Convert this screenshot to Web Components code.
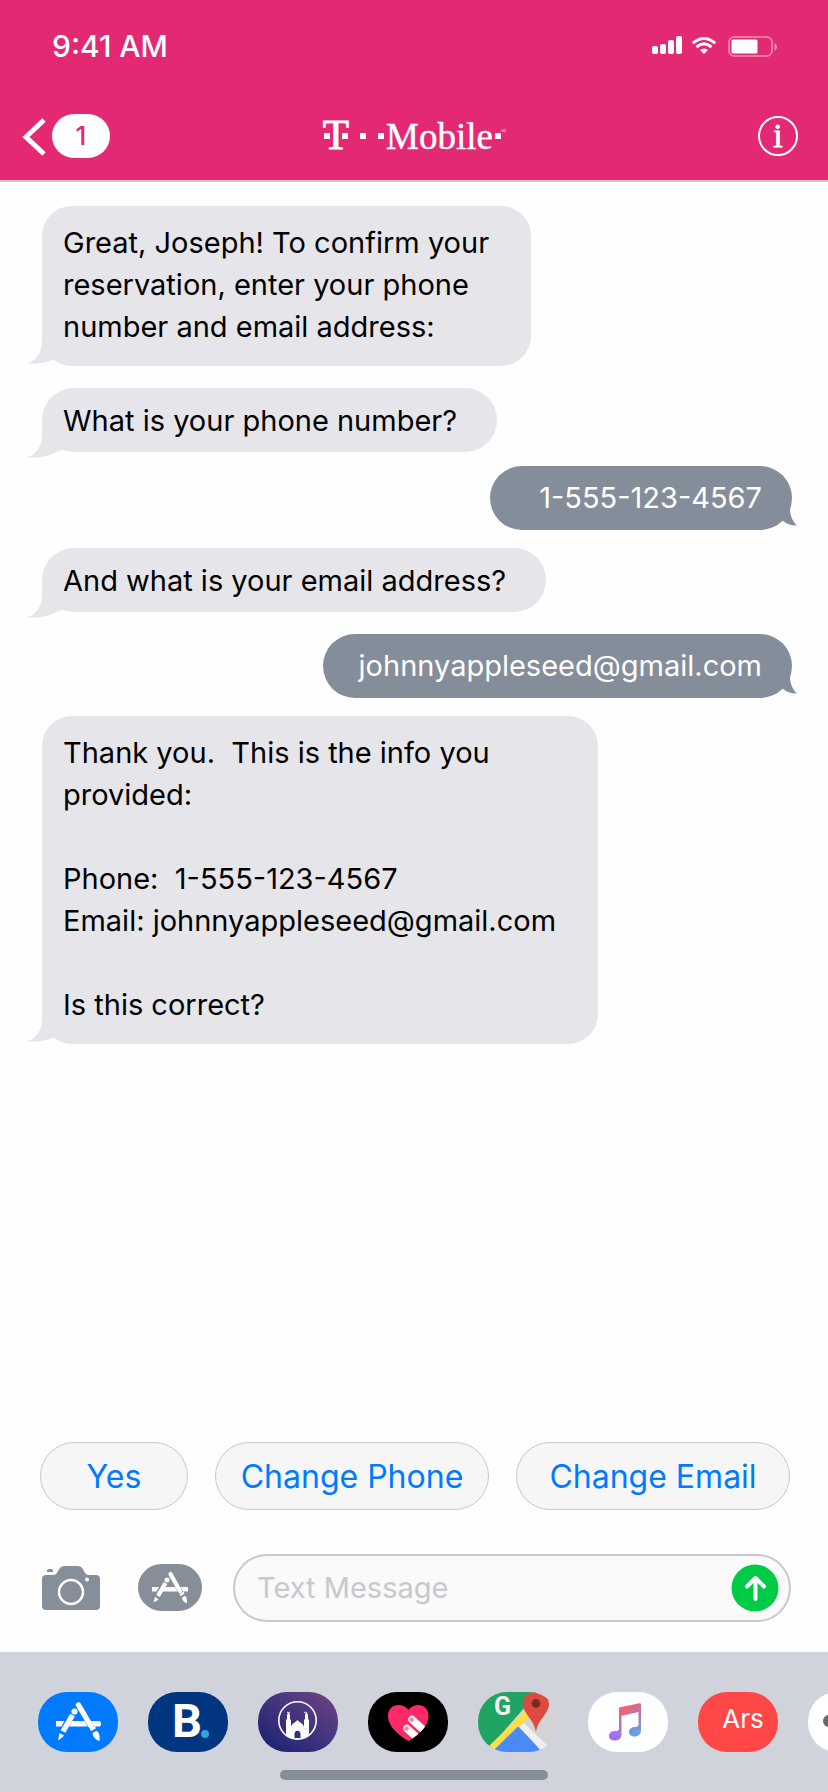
<!DOCTYPE html>
<html lang="en">
<head>
<meta charset="utf-8">
<meta name="viewport" content="width=device-width, initial-scale=1">
<title>Messages</title>
<style>
  body {
    margin: 0;
    min-height: 100vh;
    display: flex;
    flex-direction: column;
    background: #fefefe;
    font-family: Inter, "Liberation Sans", sans-serif;
    --brand: #e32874;
    --received: #e5e5ea;
    --sent: #848e9a;
    --slate: #868e99;
    --blue: #007aff;
  }
  main {
    flex: 1;
    display: flex;
    flex-direction: column;
    padding: 24px 36px 24px 42px;
  }
  .gap-s { margin-top: 14px; }
  .gap-m { margin-top: 18px; }
  .gap-l { margin-top: 22px; }
  .replies {
    display: grid;
    grid-template-columns: 148fr 274fr 274fr;
    gap: 27px;
    padding: 0 38px 0 40px;
  }
</style>
</head>
<body>
<status-bar>9:41 AM</status-bar>
<chat-header count="1"></chat-header>

<main>
  <chat-bubble>Great, Joseph! To confirm your
reservation, enter your phone
number and email address:</chat-bubble>
  <chat-bubble class="gap-l" short>What is your phone number?</chat-bubble>
  <chat-bubble class="gap-s" sent>1-555-123-4567</chat-bubble>
  <chat-bubble class="gap-m" short>And what is your email address?</chat-bubble>
  <chat-bubble class="gap-l" sent>johnnyappleseed@gmail.com</chat-bubble>
  <chat-bubble class="gap-m">Thank you.  This is the info you
provided:

Phone:  1-555-123-4567
Email: johnnyappleseed@gmail.com

Is this correct?</chat-bubble>
</main>

<div class="replies">
  <quick-reply>Yes</quick-reply>
  <quick-reply>Change Phone</quick-reply>
  <quick-reply>Change Email</quick-reply>
</div>
<message-composer></message-composer>

<app-dock>
  <app-icon label="App Store" style="--tile:#007aff">
    <svg viewBox="0 0 80 60" width="80" height="60"><g fill="#fff"><path d="M18 29h8.500l-3 5.500H18zM34 29h12.500l3 5.500H31zM53 29h9l1 2v2l-1 1.500h-6z"/><path d="M40.500 13 52.500 33.500" stroke="#fff" stroke-width="5.400" stroke-linecap="round"/><path d="M34.500 23 25 39.500" stroke="#fff" stroke-width="5.400"/><circle cx="36.500" cy="19.500" r="3.100"/><path d="m21.500 41 4.500 2.500-1.500 1.700-4.500 3.300zM54.500 41l4-2.200c3 2 3.500 5 3 10.200-3.500-1-6.500-3.500-7-8zM51.500 36.500l5-3 1.500 2.800-5 3z"/></g></svg>
  </app-icon>
  <app-icon label="Booking" style="--tile:#003580">
    <svg viewBox="0 0 80 60" width="80" height="60"><text x="24" y="45" font-family="Roboto" font-weight="700" font-size="47" fill="#fff">B</text><circle cx="57" cy="42" r="4" fill="#2ba5df"/></svg>
  </app-icon>
  <app-icon label="Prayer times" style="--tile:linear-gradient(35deg,#1f2474 10%,#3d317b 45%,#6b4483 95%)">
    <svg viewBox="0 0 80 60" width="80" height="60"><circle cx="39.500" cy="28.500" r="18.700" fill="none" stroke="#fff" stroke-width="1.600"/><path fill="#fff" d="M28 43V28l1-1v-4l1.500-3 1.500 3v4l1 1v7c1-4 4-4 6.500-7 2.500 3 5.500 3 6.500 7v-7l1-1v-4l1.500-3 1.500 3v4l1 1v15c-3 2.600-7 4-11.500 4s-8.500-1.400-11.500-4z"/><path fill="#36307b" d="M36.500 46v-4q0-3 3-3.200 3 .2 3 3.200v4z"/><path d="M29 20q1.500 2 3 0m14 0q1.500 2 3 0M28 31h5m13 0h5" stroke="#fff" fill="none"/></svg>
  </app-icon>
  <app-icon label="Heart" style="--tile:#000">
    <svg viewBox="0 0 80 60" width="80" height="60"><defs><clipPath id="heart"><path d="M40.500 49C32 44 20 35 20 24c0-12 14-14.500 20.500-6C47 9.500 60.500 12 60.500 24c0 11-11.500 20-20 25z"/></clipPath></defs><g clip-path="url(#heart)"><path fill="#ff2968" d="M18 8h46v44H18z"/><g stroke="#fff" stroke-width="7.500" stroke-linecap="round"><path d="M44 27.500 62 44M39 36.500l14 13"/></g><circle cx="43.500" cy="27.500" r="2.300" fill="#ff7fa3"/><circle cx="38.500" cy="36.500" r="2.300" fill="#ff7fa3"/></g></svg>
  </app-icon>
  <app-icon label="Maps" style="--tile:#d3d3d3">
    <svg viewBox="0 0 80 60" width="80" height="60"><path fill="#1fa463" d="M0 0h60L8 60H0z"/><path fill="#ffdd45" d="m50 16 5 5-39 40-6-6z"/><path fill="#4a8af6" d="M40 34.500 66 61H13z"/><path fill="#efefef" d="m41.500 34.500 4-4L73 57l-8 4z"/><path fill="#dd4b3e" d="M45 12C45-4 71-4 71 12c0 10-11 15-13 28C56 27 45 22 45 12z"/><circle cx="58" cy="11.500" r="4.400" fill="#7d2a23"/><text x="16" y="23" font-family="Roboto" font-weight="700" font-size="25" fill="#f3f3f3">G</text></svg>
  </app-icon>
  <app-icon label="Music" style="--tile:#fff">
    <svg viewBox="0 0 80 60" width="80" height="60"><defs><linearGradient id="note" x1="0" y1="0" x2="0" y2="1"><stop offset="0" stop-color="#f4606c"/><stop offset=".35" stop-color="#dc6a92"/><stop offset=".75" stop-color="#a377ea"/><stop offset="1" stop-color="#9c6bff"/></linearGradient><linearGradient id="note2" x1="0" y1="0" x2="0" y2="1"><stop offset="0" stop-color="#e2677e"/><stop offset=".5" stop-color="#9a85c0"/><stop offset="1" stop-color="#5ba5ee"/></linearGradient></defs><path fill="url(#note)" d="M31 15.500 42 13.300V22l-8.500 1.800V42c0 4-2.500 6.500-6.500 6.500-3.500 0-6-1.500-6-4.500s2.500-5 6-5c2 0 3.500-.5 4-1.500z"/><path fill="url(#note2)" d="m41.500 13.400 9.500-2.100q2-.3 2 1.200V38c0 4-2.500 6.500-6.500 6.500-3 0-5.500-1.500-5.500-4.500s2.500-5 6-5q3 0 3.500-2V20l-9 2z"/></svg>
  </app-icon>
  <app-icon label="Ars" style="--tile:#ff4748"><span>Ars</span></app-icon>
  <app-icon label="More" style="--tile:#fff">
    <svg viewBox="0 0 80 60" width="80" height="60" fill="#68696e"><circle cx="21" cy="29" r="6"/><circle cx="40" cy="29" r="6"/><circle cx="59" cy="29" r="6"/></svg>
  </app-icon>
</app-dock>

<script>
  const define = (name, html, setup) => {
    const template = document.createElement("template");
    template.innerHTML = html.trim();
    customElements.define(name, class extends HTMLElement {
      constructor() {
        super();
        this.attachShadow({ mode: "open" }).append(template.content.cloneNode(true));
      }
      connectedCallback() { if (setup) setup(this, this.shadowRoot); }
    });
  };

  define("status-bar", `
    <style>
      :host { display: flex; justify-content: space-between; align-items: center; height: 92px;
              padding: 0 50px 0 52px; background: var(--brand); color: #fff;
              font-size: 30px; font-weight: 500; }
    </style>
    <span><slot></slot></span>
    <svg width="126" height="22" viewBox="0 0 126 22" fill="#fff" role="img" aria-label="Signal, Wi-Fi, battery">
      <rect y="11" width="6" height="8" rx="2"/><rect x="8" y="9" width="6" height="10" rx="2"/>
      <rect x="16" y="5" width="6" height="14" rx="2"/><rect x="24" y="1" width="6" height="18" rx="2"/>
      <path d="M52 19l-4-4q4-3 8 0z"/>
      <path d="M44.500 12q7.500-6.500 15 0M40.800 8.200q11.200-9.500 22.400 0" fill="none" stroke="#fff" stroke-width="3"/>
      <rect x="77" y="2" width="43" height="19" rx="5" fill="none" stroke="#fff" stroke-opacity=".5" stroke-width="1.500"/>
      <rect x="79.500" y="4.500" width="26" height="14" rx="1.500"/>
      <path d="M122.500 8q2.500 1.500 2.500 4t-2.500 4z" opacity=".5"/>
    </svg>`);

  define("chat-header", `
    <style>
      :host { display: grid; grid-template-columns: 1fr auto 1fr; align-items: center; height: 88px;
              padding: 0 30px 0 22px; background: var(--brand); border-bottom: 2px solid #c9c9cb; }
      button { display: flex; align-items: center; padding: 0; border: 0; background: none; }
      .back { gap: 6px; justify-self: start; }
      .count { width: 58px; height: 44px; border-radius: 22px; background: #fff; color: var(--brand);
               font: 500 26px/44px Inter, sans-serif; text-align: center; }
      .info { justify-self: end; }
      .logo { display: block; margin-left: 10px; }
    </style>
    <button class="back" aria-label="Back">
      <svg width="24" height="44" viewBox="0 0 24 44"><path d="M22 6 4 23l18 17" fill="none" stroke="#fff" stroke-width="5"/></svg>
      <span class="count"></span>
    </button>
    <svg class="logo" width="190" height="60" viewBox="-4 -8 190 60" fill="#fff" role="img" aria-label="T-Mobile">
      <g font-family="Liberation Serif">
        <text x="12" y="35" font-size="43" text-anchor="middle" stroke="#fff">T</text>
        <text x="62" y="35" font-size="37" stroke="#fff" stroke-width=".4">Mobile</text>
        <text x="177" y="19" font-size="7">®</text>
      </g>
      <path d="M0 19h6v6H0zM18 19h6v6h-6zM36 19h6v6h-6zM54 19h6v6h-6zM171 19h6v6h-6z"/>
    </svg>
    <button class="info" aria-label="Details">
      <svg width="40" height="40" viewBox="0 0 40 40" fill="#fff"><circle cx="20" cy="20" r="19" fill="none" stroke="#fff" stroke-width="2"/>
      <text x="20" y="31" font-family="Liberation Serif" font-size="34" text-anchor="middle" stroke="#fff" stroke-width=".8">i</text></svg>
    </button>`,
    (el, root) => { root.querySelector(".count").textContent = el.getAttribute("count"); });

  define("chat-bubble", `
    <style>
      :host { display: block; position: relative; align-self: flex-start; box-sizing: border-box;
              min-height: 64px; padding: 16px 42px 18px 21px; border-radius: 30px;
              background: var(--received); color: #000; font-size: 29px; line-height: 42px; white-space: pre-wrap; }
      :host([short]) { padding: 12px 40px 10px 21px; border-radius: 32px; }
      :host([sent]) { align-self: flex-end; min-width: 302px; padding: 11px 30px 11px 36px; border-radius: 32px;
                      background: var(--sent); color: #fff; text-align: right; }
      svg { position: absolute; }
      .in { left: -15px; bottom: 2px; fill: var(--received); }
      .out { display: none; right: -5px; bottom: 4px; fill: var(--sent); }
      :host([short]) .in { bottom: -6px; }
      :host([sent]) .in { display: none; }
      :host([sent]) .out { display: block; }
    </style><slot></slot><svg class="in" width="40" height="40" viewBox="0 0 40 40"><path d="M15 0V18C15 28 9 37 0 39.500 11 40 19 39 27 35l10-4V0z"/></svg><svg class="out" width="26" height="28" viewBox="0 0 26 28"><path d="M20 6 19 11C19 18 22 24 26 27.500 20 27.500 16 26 12 23L4 18 10 6z"/></svg>`);

  define("quick-reply", `
    <style>
      :host { display: block; }
      button { width: 100%; height: 68px; padding: 2px 0 0; border: 1px solid #c8c8ca; border-radius: 34px;
               background: #f6f6f6; color: var(--blue); font: 32px/64px Inter, sans-serif; }
    </style>
    <button><slot></slot></button>`);

  define("message-composer", `
    <style>
      :host { display: flex; align-items: center; padding: 44px 37px 30px 42px; }
      button { display: block; flex: none; padding: 0; border: 0; background: none; }
      svg { display: block; }
      .apps { margin: 0 31px 0 38px; }
      .field { flex: 1; display: flex; align-items: center; box-sizing: border-box; height: 68px; min-width: 0;
               padding: 0 10px 0 22px; border: 2px solid #c8c8cd; border-radius: 34px; background: #fafafa; }
      input { flex: 1; min-width: 0; padding: 0; border: 0; outline: 0; background: none; color: #000;
              font: 29px/40px Inter, sans-serif; }
      input::placeholder { color: #c8c8cd; opacity: 1; }
    </style>
    <button aria-label="Camera">
      <svg width="58" height="48" viewBox="0 0 58 48"><path fill="var(--slate)" d="M4 11h8q2 0 3.500-3l2-3.500Q19 2 22 2h14q3 0 4.500 2.500l2 3.500q1.500 3 3.500 3h8q4 0 4 4v27q0 4-4 4H4q-4 0-4-4V15q0-4 4-4zM5 8V6.500Q5 5 7 5h2q2 0 2 1.500V8z"/><circle cx="29" cy="28" r="12" fill="none" stroke="#fff" stroke-width="2.500"/><circle cx="45" cy="15.500" r="2" fill="#fff"/></svg>
    </button>
    <button class="apps" aria-label="Apps">
      <svg width="64" height="48" viewBox="0 0 64 48"><rect width="64" height="47" rx="23.500" fill="var(--slate)"/><g fill="#fff"><path d="M14 23h7l-2.500 4.500H14zM27 23h10l2.500 4.500H24.500zM42.500 23h7l.5 1v2.500l-.5 1H45z"/><path d="m32.500 10 9.500 17" stroke="#fff" stroke-width="4.200" stroke-linecap="round"/><path d="M27.500 19 20 32" stroke="#fff" stroke-width="4.200"/><circle cx="29" cy="16" r="2.500"/><path d="m17 33 3.500 2-1.500 1.500-3.500 2zM44 33.500l3-1.800q2.500 2 2 7.500-4.500-1.200-5-5.700zM41.500 30l4-2.500 1 2.200-4 2.500z"/></g></svg>
    </button>
    <div class="field">
      <input type="text" aria-label="Text Message" placeholder="Text Message">
      <button aria-label="Send">
        <svg width="48" height="48" viewBox="0 0 48 48"><circle cx="24" cy="24" r="23.500" fill="#00cb47"/><path d="M24.500 35V14M16 22.500l8.500-8.500 8.500 8.500" fill="none" stroke="#fff" stroke-width="4" stroke-linecap="round" stroke-linejoin="round"/></svg>
      </button>
    </div>`);

  define("app-dock", `
    <style>
      :host { display: block; overflow: hidden; padding: 40px 0 12px; background: #d0d3db; }
      nav { display: flex; gap: 30px; padding-left: 38px; }
      .home { width: 268px; height: 10px; margin: 18px auto 0; border-radius: 5px; background: var(--slate); }
    </style>
    <nav aria-label="Apps"><slot></slot></nav>
    <div class="home"></div>`);

  define("app-icon", `
    <style>
      :host { display: block; flex: none; }
      button { display: flex; justify-content: center; align-items: center; width: 80px; height: 60px; padding: 0;
               border: 0; border-radius: 29px; overflow: hidden; background: var(--tile); color: #fff;
               font: 26px/32px Inter, sans-serif; }
      ::slotted(span) { padding: 0 0 6px 10px; }
    </style>
    <button><slot></slot></button>`,
    (el, root) => root.querySelector("button").setAttribute("aria-label", el.getAttribute("label")));
</script>
</body>
</html>
